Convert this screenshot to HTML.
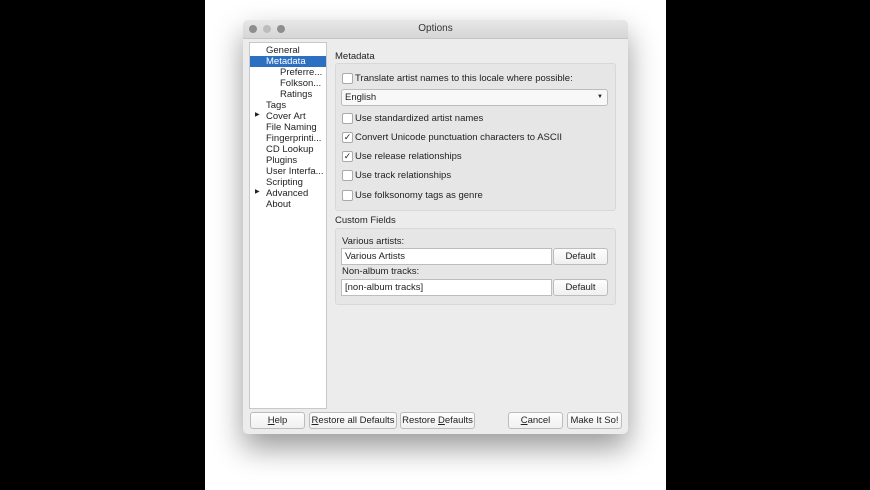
<!DOCTYPE html>
<html><head><style>
body{margin:0;width:870px;height:490px;background:#fff;position:relative;overflow:hidden;font-family:"Liberation Sans",sans-serif;font-size:9.5px;color:#222}
.blk{position:absolute;top:0;height:490px;background:#000}
.win{position:absolute;left:243px;top:20px;width:385px;height:414px;background:#ececec;border-radius:5px;box-shadow:0 14px 30px rgba(0,0,0,.4);overflow:hidden}
.tb{position:absolute;left:0;top:0;width:385px;height:18px;background:linear-gradient(#e8e8e8,#d6d6d6);border-bottom:1px solid #c4c4c4;text-align:center;line-height:18px;font-size:10px;color:#333}
.dot{position:absolute;top:5px;width:8px;height:8px;border-radius:50%;background:#8e8e8e}
.a{position:absolute;white-space:nowrap}
.list{position:absolute;left:6px;top:22px;width:76px;height:365px;background:#fff;border:1px solid #c8c8c8}
.grp{position:absolute;border:1px solid #d8d8d8;background:#e6e6e6;border-radius:3px}
.cb{position:absolute;width:9px;height:9px;border:1px solid #aaa;background:#fff;border-radius:2px;font-size:9px;line-height:9px;text-align:center}
.in{position:absolute;background:#fff;border:1px solid #bdbdbd;height:15px;line-height:15px;padding-left:3px;box-sizing:content-box}
.bt{position:absolute;background:linear-gradient(#fdfdfd,#f0f0f0);border:1px solid #bcbcbc;border-radius:3px;height:15px;line-height:15px;text-align:center}
</style></head><body>
<div class="blk" style="left:0;width:205px"></div>
<div class="blk" style="left:666px;width:204px"></div>
<div class="win">
<div class="tb">Options<div class="dot" style="left:6px"></div><div class="dot" style="left:20px;background:#bdbdbd"></div><div class="dot" style="left:34px"></div></div>
<div class="list">
<div class="a" style="left:16px;top:2px">General</div>
<div class="a" style="left:0;top:13px;width:76px;height:11px;background:#2d6fc0"></div>
<div class="a" style="left:16px;top:13px;color:#fff">Metadata</div>
<div class="a" style="left:30px;top:24px">Preferre...</div>
<div class="a" style="left:30px;top:35px">Folkson...</div>
<div class="a" style="left:30px;top:46px">Ratings</div>
<div class="a" style="left:16px;top:57px">Tags</div>
<div class="a" style="left:5px;top:68px;font-size:6px">▶</div>
<div class="a" style="left:16px;top:68px">Cover Art</div>
<div class="a" style="left:16px;top:79px">File Naming</div>
<div class="a" style="left:16px;top:90px">Fingerprinti...</div>
<div class="a" style="left:16px;top:101px">CD Lookup</div>
<div class="a" style="left:16px;top:112px">Plugins</div>
<div class="a" style="left:16px;top:123px">User Interfa...</div>
<div class="a" style="left:16px;top:134px">Scripting</div>
<div class="a" style="left:5px;top:145px;font-size:6px">▶</div>
<div class="a" style="left:16px;top:145px">Advanced</div>
<div class="a" style="left:16px;top:156px">About</div>
</div>
<div class="a" style="left:92px;top:31px">Metadata</div>
<div class="grp" style="left:92px;top:43px;width:279px;height:146px"></div>
<div class="cb" style="left:99px;top:53px"></div><div class="a" style="left:112px;top:53px">Translate artist names to this locale where possible:</div>
<div class="in" style="left:98px;top:69px;width:262px;border-radius:3px;background:#f8f8f8">English<span style="position:absolute;right:4px;font-size:6px">▼</span></div>
<div class="cb" style="left:99px;top:93px"></div><div class="a" style="left:112px;top:93px">Use standardized artist names</div>
<div class="cb" style="left:99px;top:112px">✓</div><div class="a" style="left:112px;top:112px">Convert Unicode punctuation characters to ASCII</div>
<div class="cb" style="left:99px;top:131px">✓</div><div class="a" style="left:112px;top:131px">Use release relationships</div>
<div class="cb" style="left:99px;top:150px"></div><div class="a" style="left:112px;top:150px">Use track relationships</div>
<div class="cb" style="left:99px;top:170px"></div><div class="a" style="left:112px;top:170px">Use folksonomy tags as genre</div>
<div class="a" style="left:92px;top:195px">Custom Fields</div>
<div class="grp" style="left:92px;top:208px;width:279px;height:75px"></div>
<div class="a" style="left:99px;top:216px">Various artists:</div>
<div class="in" style="left:98px;top:228px;width:206px">Various Artists</div>
<div class="bt" style="left:310px;top:228px;width:53px">Default</div>
<div class="a" style="left:99px;top:246px">Non-album tracks:</div>
<div class="in" style="left:98px;top:259px;width:206px">[non-album tracks]</div>
<div class="bt" style="left:310px;top:259px;width:53px">Default</div>
<div class="bt" style="left:7px;top:392px;width:53px"><u>H</u>elp</div>
<div class="bt" style="left:66px;top:392px;width:86px"><u>R</u>estore all Defaults</div>
<div class="bt" style="left:157px;top:392px;width:73px">Restore <u>D</u>efaults</div>
<div class="bt" style="left:265px;top:392px;width:53px"><u>C</u>ancel</div>
<div class="bt" style="left:324px;top:392px;width:53px">Make It So!</div>
</div>
</body></html>
